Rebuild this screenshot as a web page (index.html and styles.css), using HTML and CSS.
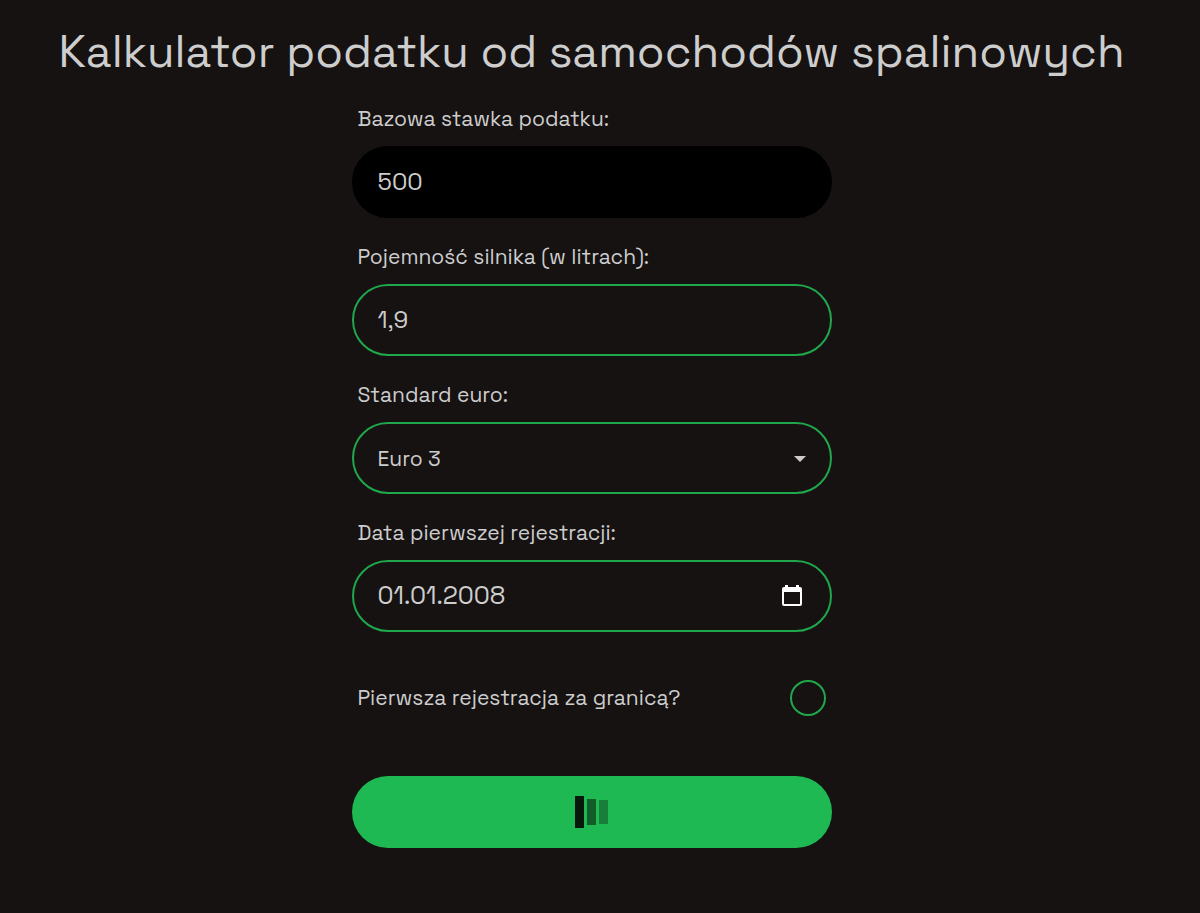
FILE: index.html
```html
<!DOCTYPE html>
<html lang="pl">
<head>
    <meta charset="UTF-8">
    <meta name="viewport" content="width=device-width, initial-scale=1.0">
    <title>Kalkulator podatku od samochodów spalinowych</title>
    <link rel="stylesheet" href="styles.css">
</head>
<body>
    <main>
        <h1>Kalkulator podatku od samochodów spalinowych</h1>
        <form id="taxForm">
            <div class="field">
                <label for="baseRate">Bazowa stawka podatku:</label>
                <input class="control filled" type="text" id="baseRate" name="baseRate" value="500" readonly>
            </div>

            <div class="field">
                <label for="capacity">Pojemność silnika (w litrach):</label>
                <input class="control" type="text" inputmode="decimal" id="capacity" name="capacity" value="1,9">
            </div>

            <div class="field">
                <label for="euro">Standard euro:</label>
                <div class="control-wrap">
                    <select class="control" id="euro" name="euro">
                        <option>Euro 1</option>
                        <option>Euro 2</option>
                        <option selected>Euro 3</option>
                        <option>Euro 4</option>
                        <option>Euro 5</option>
                        <option>Euro 6</option>
                    </select>
                    <svg class="arrow" width="12" height="6" viewBox="0 0 12 6" aria-hidden="true">
                        <path d="M0 0h12L6 6z" fill="currentColor"/>
                    </svg>
                </div>
            </div>

            <div class="field">
                <label for="regDate">Data pierwszej rejestracji:</label>
                <div class="control-wrap">
                    <input class="control date" type="text" inputmode="numeric" id="regDate" name="regDate" value="01.01.2008">
                    <button type="button" class="calendar" aria-label="Wybierz datę">
                        <svg width="20" height="22" viewBox="0 0 20 22" aria-hidden="true">
                            <path fill="#fff" fill-rule="evenodd" d="M3 0h3v2h8V0h3v2h1a2 2 0 0 1 2 2v15a2 2 0 0 1-2 2H2a2 2 0 0 1-2-2V4a2 2 0 0 1 2-2h1zM2 7v12h16V7z"/>
                        </svg>
                    </button>
                </div>
            </div>

            <div class="check-row">
                <label for="abroad">Pierwsza rejestracja za granicą?</label>
                <input type="checkbox" id="abroad" name="abroad">
            </div>

            <button type="submit" class="submit" aria-label="Obliczanie">
                <svg width="34" height="32" viewBox="0 0 34 32" aria-hidden="true">
                    <rect x="0" y="0" width="9" height="32" fill="#07170b"/>
                    <rect x="12" y="3" width="9" height="26" fill="#115d29"/>
                    <rect x="24" y="4" width="9" height="24" fill="#177f3a"/>
                </svg>
            </button>
        </form>
    </main>
</body>
</html>
```
FILE: styles.css
```css
* {
    box-sizing: border-box;
}
body {
    margin: 0;
    padding: 24px 17px 24px 0;
    background-color: #161212;
    color: #cdcdcd;
    font-family: 'Space Grotesk', 'Inter', sans-serif;
    font-size: 21px;
    line-height: 24px;
}
h1 {
    margin: 0 0 27px;
    font-size: 45px;
    font-weight: 400;
    line-height: 56px;
    text-align: center;
}
form {
    max-width: 480px;
    margin: 0 auto;
}
label {
    padding-left: 6px;
}
.field {
    margin-bottom: 27px;
}
.field label {
    display: block;
    margin-bottom: 15px;
}
.control-wrap {
    position: relative;
}
.control {
    display: block;
    width: 100%;
    height: 72px;
    padding: 0 24px 2px;
    border: 2px solid #20a64b;
    border-radius: 36px;
    background-color: transparent;
    color: inherit;
    font-family: inherit;
    font-size: 24px;
    appearance: none;
}
select.control {
    padding-bottom: 0;
    font-size: 21px;
}
.filled {
    background-color: #000;
    border-color: #000;
}
.control.date {
    font-size: 25px;
}
.arrow {
    position: absolute;
    top: 34px;
    right: 26px;
    pointer-events: none;
}
.calendar {
    position: absolute;
    top: 25px;
    right: 30px;
    display: flex;
    padding: 0;
    border: none;
    background: none;
    cursor: pointer;
}
.check-row {
    display: flex;
    justify-content: space-between;
    align-items: center;
    margin: 48px 0 60px;
    padding-right: 6px;
}
.check-row input {
    width: 36px;
    height: 36px;
    margin: 0;
    border: 2px solid #20a64b;
    border-radius: 50%;
    appearance: none;
    cursor: pointer;
}
.check-row input:checked {
    background-color: #1eb953;
}
.submit {
    display: flex;
    justify-content: center;
    align-items: center;
    width: 100%;
    height: 72px;
    border: none;
    border-radius: 36px;
    background-color: #1eb953;
    cursor: pointer;
}
```
